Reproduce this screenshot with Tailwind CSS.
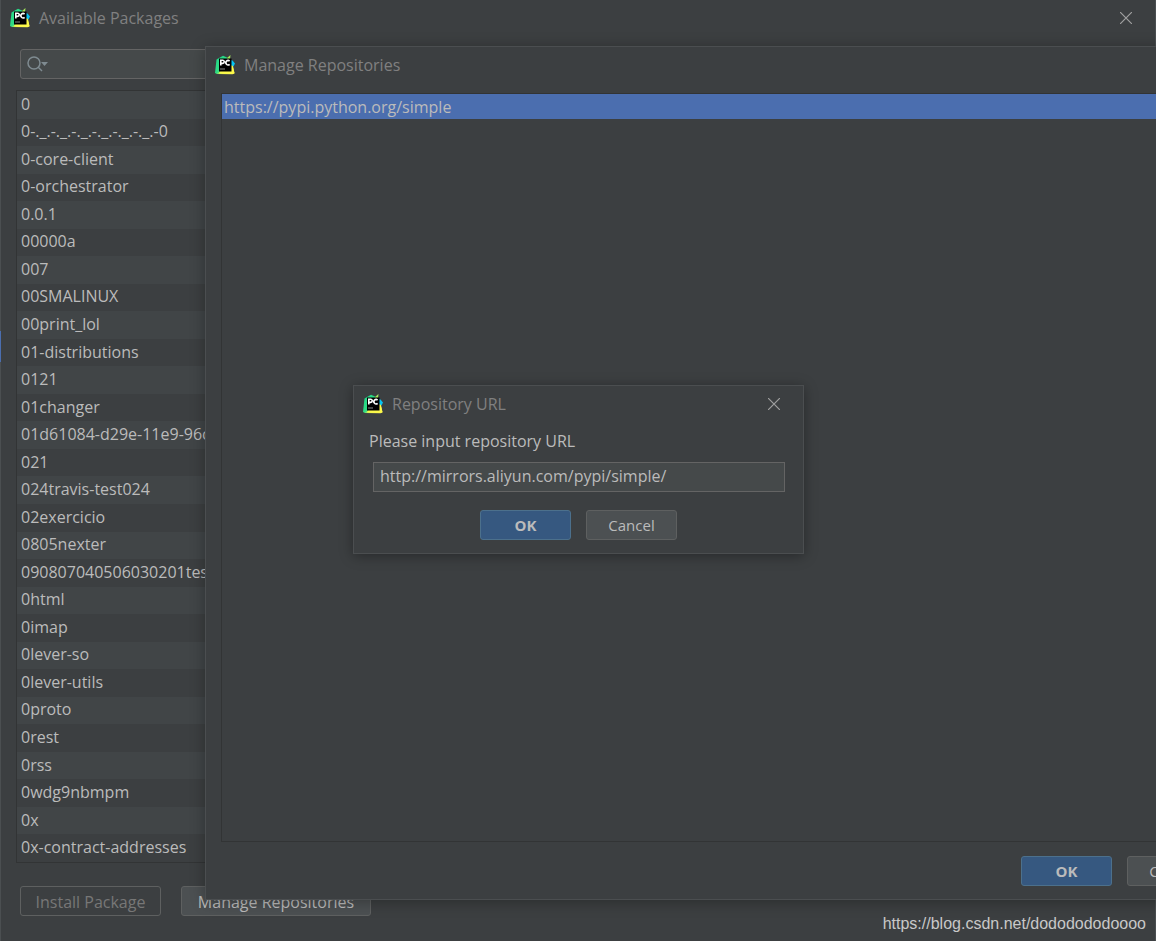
<!DOCTYPE html>
<html lang="en">
<head>
<meta charset="utf-8">
<title>Available Packages</title>
<script src="https://cdn.jsdelivr.net/npm/@tailwindcss/browser@4"></script>
</head>
<body class="relative h-screen overflow-hidden bg-[#3c3f41] font-['Open_Sans','Noto_Sans',sans-serif] text-base leading-5 text-[#bbbbbb]">
<svg class="absolute size-0" aria-hidden="true">
  <defs>
    <linearGradient id="edge" x1="0" y1="0" x2="1" y2="1">
      <stop offset="0" stop-color="#21d789"/><stop offset=".5" stop-color="#2fdc84"/><stop offset=".68" stop-color="#e6f24c"/><stop offset="1" stop-color="#fcf84a"/>
    </linearGradient>
  </defs>
  <symbol id="pycharm" viewBox="0 0 20 20">
    <path fill="url(#edge)" d="M1.500 4.500 8 .8l4 1.700v2L16 8l2 3 1.500 7.500-2 .7L2 19l-2-1z"/>
    <path fill="#07c3f2" d="m15.500 5 2 .5 2.500 3-1.500 3-3-1z"/>
    <path fill="#a5e85c" d="m12 3 3.500-3-.5 4.500h-3z"/>
    <path fill="#fcf84a" d="M15.500 10.500h2L19.500 18l-2 1-14-.5 2-2.500h10z"/>
    <path fill="#000" d="M4 3.500h12.500v13H4z"/>
    <path fill="none" stroke="#fff" stroke-width="1.600" d="M5.800 10.500V5.300h1.900a1.500 1.500 0 0 1 0 3.100H6M14.600 6.100a2.200 2.200 0 1 0 0 3.200"/>
    <path fill="#888" d="M5 13.500h5v1H5z"/>
  </symbol>
  <symbol id="close" viewBox="0 0 12 12"><path fill="none" stroke="#a0a0a0" stroke-width="1.200" d="m0 0 12 12M12 0 0 12"/></symbol>
</svg>

<main class="flex h-full flex-col border-x border-[#4b4f51] pl-[15px]">
  <header class="-ml-[6px] flex h-[35px] shrink-0 items-center pr-[23px]">
    <svg class="size-5"><use href="#pycharm"/></svg>
    <h1 class="ml-[9px] flex-1 text-[#808080]">Available Packages</h1>
    <button aria-label="Close" class="flex"><svg class="size-3"><use href="#close"/></svg></button>
  </header>
  <label class="mt-[14px] ml-1 flex h-[30px] shrink-0 items-center rounded-[3px] border border-[#646464] bg-[#45494a] px-1.5">
    <svg class="h-4 w-[21px] shrink-0" viewBox="0 0 21 16"><g fill="none" stroke="#7f8b91" stroke-width="1.500"><circle cx="7" cy="7" r="6"/><path d="m11 11 4 4"/></g><path fill="#7f8b91" d="M14 6h7l-3.500 4z"/></svg>
    <input type="text" aria-label="Search packages" class="min-w-0 flex-1 outline-none">
  </label>
  <ul id="packages" class="mt-[11px] flex min-h-0 flex-1 flex-col border border-r-0 border-[#323435]"></ul>
  <footer class="mt-[23px] mb-[25px] ml-1 flex gap-5">
    <button disabled class="h-[30px] w-[141px] rounded-[3px] border border-[#5e6060] pt-0.5 text-[#777777]">Install Package</button>
    <button class="h-[30px] w-[190px] rounded-[3px] border border-[#5e6060] bg-[#4c5052] pt-0.5">Manage Repositories</button>
  </footer>
</main>
<div aria-hidden="true" class="absolute top-[331px] left-0 h-[31px] w-px bg-[#4b6eaf]"></div>

<section aria-label="Manage Repositories" class="absolute top-[46px] right-[-78px] bottom-[41px] left-[205px] flex flex-col border border-[#4b4e50] bg-[#3c3f41] px-[15px] shadow-[0_2px_14px_rgba(0,0,0,0.3)]">
  <header class="-ml-[6px] flex h-[35px] shrink-0 items-center">
    <svg class="size-5"><use href="#pycharm"/></svg>
    <h2 class="ml-[9px] text-[#808080]">Manage Repositories</h2>
  </header>
  <ul class="mt-[11px] flex-1 border border-[#323435]">
    <li class="h-[25px] bg-[#4b6eaf] px-0.5 leading-[27px]">https://pypi.python.org/simple</li>
  </ul>
  <footer class="mt-[14px] mb-[13px] flex justify-end gap-[15px] text-[15px]">
    <button class="h-[30px] w-[91px] rounded-[3px] border border-[#4c708c] bg-[#365880] font-bold">OK</button>
    <button class="h-[30px] w-[91px] rounded-[3px] border border-[#5e6060] bg-[#4c5052]">Cancel</button>
  </footer>
</section>

<section role="dialog" aria-label="Repository URL" class="absolute top-[385px] left-[353px] w-[451px] border border-[#4b4e50] bg-[#3c3f41] px-[15px] pb-[13px] shadow-[0_2px_12px_rgba(0,0,0,0.35)]">
  <header class="-ml-[6px] flex h-[35px] items-center pr-2">
    <svg class="size-5"><use href="#pycharm"/></svg>
    <h2 class="ml-[9px] flex-1 text-[#808080]">Repository URL</h2>
    <button aria-label="Close" class="flex"><svg class="size-3"><use href="#close"/></svg></button>
  </header>
  <label for="url" class="mt-[10px] block">Please input repository URL</label>
  <div class="mt-[11px] pr-[3px] pl-1"><input id="url" type="text" value="http://mirrors.aliyun.com/pypi/simple/" class="block h-[30px] w-full border border-[#646464] bg-[#45494a] px-1.5 pb-0.5 outline-none"></div>
  <div class="mt-[18px] flex justify-center gap-[15px] text-[15px]">
    <button class="h-[30px] w-[91px] rounded-[3px] border border-[#4c708c] bg-[#365880] font-bold">OK</button>
    <button class="h-[30px] w-[91px] rounded-[3px] border border-[#5e6060] bg-[#4c5052]">Cancel</button>
  </div>
</section>

<p class="absolute right-[10px] bottom-[7px] font-['Liberation_Sans',sans-serif] text-base leading-5 text-[#c8c8c8]">https://blog.csdn.net/dododododoooo</p>

<script>
const names = ["0","0-._.-._.-._.-._.-._.-._.-0","0-core-client","0-orchestrator","0.0.1","00000a","007","00SMALINUX","00print_lol","01-distributions","0121","01changer","01d61084-d29e-11e9-96c","021","024travis-test024","02exercicio","0805nexter","090807040506030201test","0html","0imap","0lever-so","0lever-utils","0proto","0rest","0rss","0wdg9nbmpm","0x","0x-contract-addresses"];
const list = document.getElementById("packages");
for (const name of names) {
  const row = document.createElement("li");
  row.className = "flex min-h-0 flex-1 items-center pb-0.5 pl-1 odd:bg-[#414547]";
  row.textContent = name;
  list.append(row);
}
</script>
</body>
</html>
